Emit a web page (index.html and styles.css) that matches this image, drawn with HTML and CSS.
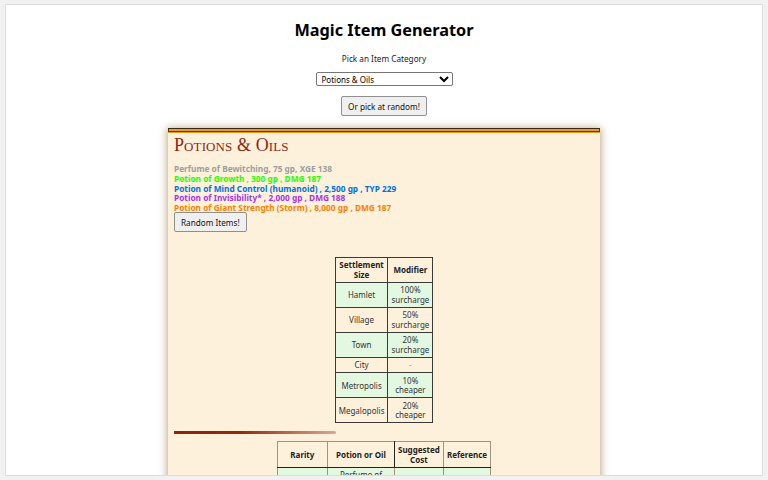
FILE: index.html
```html
<!DOCTYPE html>
<html lang="en">
<head>
<meta charset="utf-8">
<title>Magic Item Generator</title>
<link rel="stylesheet" href="styles.css">
</head>
<body>
<div class="frame">
  <main class="app">
    <h1 class="title">Magic Item Generator</h1>
    <p class="label">Pick an Item Category</p>
    <select class="category">
      <option>Potions &amp; Oils</option>
      <option>Armor</option>
      <option>Rings</option>
      <option>Rods</option>
      <option>Scrolls</option>
      <option>Staffs</option>
      <option>Wands</option>
      <option>Weapons</option>
      <option>Wondrous Items</option>
    </select>
    <button class="btn random-cat">Or pick at random!</button>

    <section class="card">
      <h2 class="card-title">Potions &amp; Oils</h2>
      <ul class="items">
        <li class="common">Perfume of Bewitching, 75 gp, XGE 138</li>
        <li class="uncommon">Potion of Growth , 300 gp , DMG 187</li>
        <li class="rare">Potion of Mind Control (humanoid) , 2,500 gp , TYP 229</li>
        <li class="very-rare">Potion of Invisibility* , 2,000 gp , DMG 188</li>
        <li class="legendary">Potion of Giant Strength (Storm) , 8,000 gp , DMG 187</li>
      </ul>
      <button class="btn">Random Items!</button>

      <table class="grid settlements">
        <thead>
          <tr><th>Settlement Size</th><th>Modifier</th></tr>
        </thead>
        <tbody>
          <tr class="alt"><td>Hamlet</td><td>100% surcharge</td></tr>
          <tr><td>Village</td><td>50% surcharge</td></tr>
          <tr class="alt"><td>Town</td><td>20% surcharge</td></tr>
          <tr><td>City</td><td class="dash">-</td></tr>
          <tr class="alt"><td>Metropolis</td><td>10% cheaper</td></tr>
          <tr><td>Megalopolis</td><td>20% cheaper</td></tr>
        </tbody>
      </table>

      <div class="rule"></div>

      <table class="grid catalog">
        <thead>
          <tr><th class="c-rarity">Rarity</th><th class="c-name">Potion or Oil</th><th class="c-cost">Suggested Cost</th><th class="c-ref">Reference</th></tr>
        </thead>
        <tbody>
          <tr class="alt"><td>Common</td><td>Perfume of Bewitching</td><td>75 gp</td><td>XGE 138</td></tr>
          <tr><td>Common</td><td>Potion of Climbing</td><td>75 gp</td><td>DMG 187</td></tr>
          <tr class="alt"><td>Common</td><td>Potion of Healing</td><td>50 gp</td><td>DMG 187</td></tr>
        </tbody>
      </table>
    </section>
  </main>
</div>
</body>
</html>
```

FILE: styles.css
```css
html, body {
  margin: 0;
  padding: 0;
}

body {
  background: #f1f1f1;
  font-family: "Noto Sans", "Open Sans", sans-serif;
  color: #222;
  padding: 4px 5px 0 5px;
  height: 480px;
  box-sizing: border-box;
  overflow: hidden;
}

.frame {
  background: #fff;
  border: 1px solid #dcdcdc;
  height: 470px;
  overflow: hidden;
}

.app {
  display: flex;
  flex-direction: column;
  align-items: center;
}

.title {
  margin: 14px 0 0;
  font-size: 16.3px;
  font-weight: 700;
  line-height: 22px;
  color: #000;
}

.label {
  margin: 12px 0 0;
  font-size: 8.2px;
  line-height: 11px;
  color: #222;
}

.category {
  margin-top: 8px;
  width: 137px;
  height: 14px;
  font-family: "Noto Sans", sans-serif;
  font-size: 8px;
  line-height: 11px;
  padding: 0 1px;
  border: 1px solid #767676;
  border-radius: 2px;
  background: #fff;
  color: #000;
}

.btn {
  font-family: "Noto Sans", sans-serif;
  font-size: 8.2px;
  line-height: 11px;
  padding: 4px 6px;
  background: #efefef;
  border: 1px solid #8f8f8f;
  border-radius: 2px;
  color: #111;
}

.random-cat {
  margin-top: 10px;
  height: 20px;
}

.card {
  margin-top: 13px;
  width: 432px;
  box-sizing: border-box;
  background: #fdf1dc;
  border-top: 4px solid #e69a28;
  box-shadow: 0 -1px 0 #3b2a12, 0 0 8px 1px #b9a78a;
  padding: 0 6px 20px;
  display: flex;
  flex-direction: column;
  align-items: flex-start;
  position: relative;
}

.card::before {
  content: "";
  position: absolute;
  left: 0;
  right: 0;
  top: -4px;
  height: 3px;
  border: 1px solid #5a3a10;
  border-top: 0;
  pointer-events: none;
  box-sizing: border-box;
}

.card-title {
  margin: 0;
  font-family: "Liberation Serif", "DejaVu Serif", serif;
  font-variant: small-caps;
  font-weight: 400;
  font-size: 18px;
  line-height: 25px;
  color: #922610;
  letter-spacing: 0.1px;
}

.items {
  list-style: none;
  margin: 6px 0 0;
  padding: 0;
  font-size: 8.3px;
  line-height: 9.75px;
  font-weight: 700;
}

.common { color: #9d9d9d; }
.uncommon { color: #1eff00; }
.rare { color: #0070dd; }
.very-rare { color: #a335ee; }
.legendary { color: #ff8000; }

.items + .btn {
  height: 20px;
  margin-top: -1px;
}

.grid {
  border-collapse: collapse;
  font-size: 8px;
  line-height: 9.5px;
  color: #333;
  text-align: center;
  align-self: center;
}

.grid th,
.grid td {
  border: 1px solid #3a3a3a;
  padding: 2.5px 3px;
  font-weight: 400;
}

.grid th {
  font-weight: 700;
  color: #222;
}

.grid tbody tr { background: #fdf1dc; }
.grid tbody tr.alt { background: #e3f8e1; }

.settlements {
  margin-top: 25px;
}

.settlements th:first-child,
.settlements td:first-child { width: 45px; }
.settlements th:last-child,
.settlements td:last-child { width: 37px; }

.settlements .dash { color: #c98a7a; }

.rule {
  margin-top: 8px;
  width: 162px;
  height: 3px;
  background: linear-gradient(to right, #8a2412, #922610 40%, rgba(146, 38, 16, 0.35) 100%);
  border-radius: 0 2px 2px 0;
}

.catalog {
  margin-top: 7px;
}

.catalog th {
  height: 21px;
}

.catalog th,
.catalog td {
  border-color: #a4937a;
  padding: 2px 3px;
  line-height: 10px;
}

.catalog thead th { border-bottom: 1px solid #222; }
.catalog .c-name { border-right: 1px solid #222; }

.catalog .c-rarity { width: 43px; }
.catalog .c-name { width: 60px; }
.catalog .c-cost { width: 42px; }
.catalog .c-ref { width: 40px; }
```
